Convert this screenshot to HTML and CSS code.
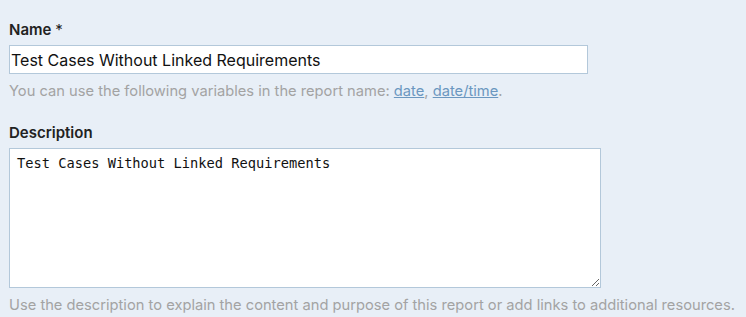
FILE: index.html
```html
<!DOCTYPE html>
<html lang="en">
<head>
    <meta charset="UTF-8">
    <title>Report</title>
    <link rel="stylesheet" href="styles.css">
</head>
<body>
    <div class="form">
        <!-- Name -->
        <div class="field">
            <label class="label" for="name">Name <span class="req">*</span></label>
            <input class="input" id="name" type="text" value="Test Cases Without Linked Requirements">
            <div class="hint">You can use the following variables in the report name: <a href="#">date</a>, <a href="#">date/time</a>.</div>
        </div>

        <!-- Description -->
        <div class="field">
            <label class="label" for="description">Description</label>
            <textarea class="textarea" id="description">Test Cases Without Linked Requirements</textarea>
            <div class="hint">Use the description to explain the content and purpose of this report or add links to additional resources.</div>
        </div>
    </div>
</body>
</html>
```

FILE: styles.css
```css
body {
    margin: 0;
    background-color: #e8eff7;
    font-family: Inter, "Noto Sans", sans-serif;
    color: #222;
}

.form {
    padding: 20px 9px 0 9px;
}

.field {
    display: flex;
    flex-direction: column;
    align-items: flex-start;
    margin-bottom: 23px;
}

.field:last-child {
    margin-bottom: 0;
}

.label {
    font-size: 15px;
    font-weight: 600;
    margin-bottom: 6px;
    color: #222;
}

.req {
    font-weight: normal;
}

.input {
    box-sizing: border-box;
    width: 579px;
    height: 29px;
    margin: 0;
    padding: 0 1px;
    border: 1px solid #b3c8da;
    background: #fff;
    font-family: Inter, "Noto Sans", sans-serif;
    font-size: 16px;
    color: #111;
}

.textarea {
    box-sizing: border-box;
    width: 592px;
    height: 140px;
    margin: 0;
    padding: 6px 7px;
    border: 1px solid #b3c8da;
    background: #fff;
    font-family: "DejaVu Sans Mono", monospace;
    font-size: 13.7px;
    color: #111;
    resize: both;
}

.hint {
    margin-top: 8px;
    font-size: 14.7px;
    line-height: 18px;
    color: #a3a3a3;
    white-space: nowrap;
}

.hint a {
    color: #6b97c0;
}
```
